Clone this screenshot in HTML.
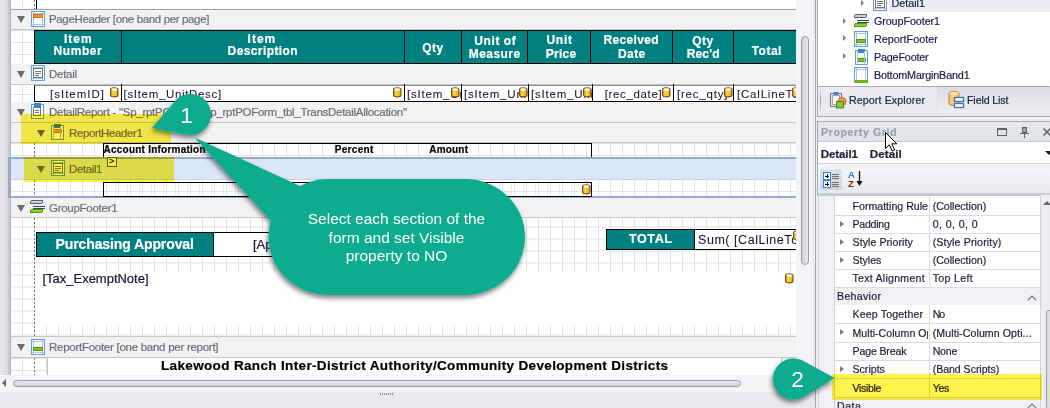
<!DOCTYPE html>
<html><head><meta charset="utf-8">
<style>
*{box-sizing:border-box;margin:0;padding:0}
html,body{width:1050px;height:408px;overflow:hidden;background:#f0f0f0;font-family:"Liberation Sans",sans-serif;position:relative}
.a{position:absolute}
#w1604_1{letter-spacing:-0.356px}
#w283_2{letter-spacing:1.000px}
#w483_3{letter-spacing:0.591px}
#w288_4{letter-spacing:1.000px}
#w700_5{letter-spacing:0.398px}
#w208_6{letter-spacing:0.392px}
#w415_7{letter-spacing:0.583px}
#w514_8{letter-spacing:0.449px}
#w257_9{letter-spacing:0.791px}
#w304_10{letter-spacing:0.260px}
#w550_11{letter-spacing:0.328px}
#w274_12{letter-spacing:0.461px}
#w208_13{letter-spacing:0.392px}
#w328_14{letter-spacing:0.149px}
#w297_15{letter-spacing:0.480px}
#w280_16{letter-spacing:-0.281px}
#w550_17{letter-spacing:1.000px}
#w975_18{letter-spacing:0.662px}
#w570_22{letter-spacing:0.649px}
#w3580_25{letter-spacing:-0.277px}
#w738_26{letter-spacing:-0.403px}
#w1020_27{letter-spacing:0.234px}
#w386_28{letter-spacing:0.319px}
#w387_29{letter-spacing:0.184px}
#w335_30{letter-spacing:-0.385px}
#w686_31{letter-spacing:-0.274px}
#w1384_32{letter-spacing:-0.105px}
#w430_34{letter-spacing:0.621px}
#w1060_36{letter-spacing:-0.015px}
#w1695_37{letter-spacing:-0.268px}
#w5070_38{letter-spacing:0.349px}
#w334_40{letter-spacing:-0.035px}
#w662_41{letter-spacing:-0.093px}
#w640_42{letter-spacing:0.034px}
#w548_43{letter-spacing:-0.180px}
#w958_44{letter-spacing:-0.165px}
#w760_45{letter-spacing:0.129px}
#w415_46{letter-spacing:-0.099px}
#w756_47{letter-spacing:0.609px}
#w372_48{letter-spacing:-0.139px}
#w320_49{letter-spacing:0.084px}
#w755_50{letter-spacing:0.009px}
#w535_51{letter-spacing:-0.007px}
#w374_52{letter-spacing:-0.248px}
#w450_53{letter-spacing:0.418px}
#w603_54{letter-spacing:0.064px}
#w687_55{letter-spacing:0.146px}
#w289_56{letter-spacing:0.008px}
#w535_57{letter-spacing:-0.007px}
#w722_58{letter-spacing:0.253px}
#w399_59{letter-spacing:0.314px}
#w706_60{letter-spacing:0.155px}
#w122_61{letter-spacing:-1.000px}
#w800_62{letter-spacing:0.037px}
#w989_63{letter-spacing:0.088px}
#w540_64{letter-spacing:-0.151px}
#w246_65{letter-spacing:-0.243px}
#w324_66{letter-spacing:0.002px}
#w665_67{letter-spacing:-0.048px}
#w290_68{letter-spacing:-0.336px}
#w166_69{letter-spacing:-0.348px}
#w440_70{letter-spacing:0.312px}
#w240_71{letter-spacing:0.536px}
</style></head><body>
<div class="a" style="left:0;top:0;width:796px;height:375px;overflow:hidden;background:#f0f0f0">
<div class="a" style="left:0px;top:0px;width:11px;height:375px;background:linear-gradient(to right,#e8e8ec,#dcdce0 60%,#c4c4c8 90%,#a8a8ac)"></div>
<div class="a" style="left:11px;top:0px;width:785px;height:10px;background-color:#fff;background-image:linear-gradient(to right,#e3e3e3 1px,transparent 1px),linear-gradient(to bottom,#e3e3e3 1px,transparent 1px);background-size:12px 12px;background-position:11px 10px;border-bottom:1px solid #a0a0a0"></div>
<div class="a" style="left:34px;top:0px;width:1px;height:9px;background:repeating-linear-gradient(to bottom,#7a7a7a 0 2px,transparent 2px 4px)"></div>
<div class="a" style="left:36px;top:0px;width:760px;height:9px;background:#fff;border-left:1px solid #000"></div>
<div class="a" style="left:11px;top:10px;width:785px;height:20px;background:#f2f2f2;border-bottom:1px solid #c6c6c6"></div>
<div class="a" style="left:17px;top:16px;width:0;height:0;border-left:4px solid transparent;border-right:4px solid transparent;border-top:7px solid #6a6a6a"></div>
<span class="a" id="w1604_1" style="left:49px;top:13.77px;font-size:11.5px;line-height:11.5px;font-weight:normal;color:#6c6c76;white-space:pre;-webkit-text-stroke:0.2px #6c6c76;">PageHeader [one band per page]</span>
<div class="a" style="left:11px;top:30px;width:785px;height:34px;background-color:#fff;background-image:linear-gradient(to right,#e3e3e3 1px,transparent 1px),linear-gradient(to bottom,#e3e3e3 1px,transparent 1px);background-size:12px 12px;background-position:11px 0px;"></div>
<div class="a" style="left:34px;top:30px;width:1px;height:34px;background:repeating-linear-gradient(to bottom,#7a7a7a 0 2px,transparent 2px 4px)"></div>
<div class="a" style="left:34px;top:30px;width:770px;height:34px;background:#008080;border:1px solid #000"></div>
<div class="a" style="left:121px;top:30px;width:1px;height:34px;background:#000"></div>
<div class="a" style="left:404px;top:30px;width:1px;height:34px;background:#000"></div>
<div class="a" style="left:461px;top:30px;width:1px;height:34px;background:#000"></div>
<div class="a" style="left:527px;top:30px;width:1px;height:34px;background:#000"></div>
<div class="a" style="left:590px;top:30px;width:1px;height:34px;background:#000"></div>
<div class="a" style="left:672px;top:30px;width:1px;height:34px;background:#000"></div>
<div class="a" style="left:733px;top:30px;width:1px;height:34px;background:#000"></div>
<span class="a" id="w283_2" style="left:64px;top:32.84px;font-size:12px;line-height:12px;font-weight:bold;color:#fff;white-space:pre;-webkit-text-stroke:0.2px #fff;">Item</span>
<span class="a" id="w483_3" style="left:53.5px;top:45.44px;font-size:12px;line-height:12px;font-weight:bold;color:#fff;white-space:pre;-webkit-text-stroke:0.2px #fff;">Number</span>
<span class="a" id="w288_4" style="left:247.6px;top:32.74px;font-size:12px;line-height:12px;font-weight:bold;color:#fff;white-space:pre;-webkit-text-stroke:0.2px #fff;">Item</span>
<span class="a" id="w700_5" style="left:227.6px;top:45.44px;font-size:12px;line-height:12px;font-weight:bold;color:#fff;white-space:pre;-webkit-text-stroke:0.2px #fff;">Description</span>
<span class="a" id="w208_6" style="left:422.3px;top:41.64px;font-size:12px;line-height:12px;font-weight:bold;color:#fff;white-space:pre;-webkit-text-stroke:0.2px #fff;">Qty</span>
<span class="a" id="w415_7" style="left:474.3px;top:34.54px;font-size:12px;line-height:12px;font-weight:bold;color:#fff;white-space:pre;-webkit-text-stroke:0.2px #fff;">Unit of</span>
<span class="a" id="w514_8" style="left:468.7px;top:48.44px;font-size:12px;line-height:12px;font-weight:bold;color:#fff;white-space:pre;-webkit-text-stroke:0.2px #fff;">Measure</span>
<span class="a" id="w257_9" style="left:546.4px;top:34.14px;font-size:12px;line-height:12px;font-weight:bold;color:#fff;white-space:pre;-webkit-text-stroke:0.2px #fff;">Unit</span>
<span class="a" id="w304_10" style="left:545.7px;top:48.44px;font-size:12px;line-height:12px;font-weight:bold;color:#fff;white-space:pre;-webkit-text-stroke:0.2px #fff;">Price</span>
<span class="a" id="w550_11" style="left:603.6px;top:34.14px;font-size:12px;line-height:12px;font-weight:bold;color:#fff;white-space:pre;-webkit-text-stroke:0.2px #fff;">Received</span>
<span class="a" id="w274_12" style="left:617.9px;top:48.44px;font-size:12px;line-height:12px;font-weight:bold;color:#fff;white-space:pre;-webkit-text-stroke:0.2px #fff;">Date</span>
<span class="a" id="w208_13" style="left:692.3px;top:34.54px;font-size:12px;line-height:12px;font-weight:bold;color:#fff;white-space:pre;-webkit-text-stroke:0.2px #fff;">Qty</span>
<span class="a" id="w328_14" style="left:686.7px;top:48.44px;font-size:12px;line-height:12px;font-weight:bold;color:#fff;white-space:pre;-webkit-text-stroke:0.2px #fff;">Rec'd</span>
<span class="a" id="w297_15" style="left:751.7px;top:45.34px;font-size:12px;line-height:12px;font-weight:bold;color:#fff;white-space:pre;-webkit-text-stroke:0.2px #fff;">Total</span>
<div class="a" style="left:11px;top:64px;width:785px;height:21px;background:#f2f2f2;border-bottom:1px solid #c6c6c6"></div>
<div class="a" style="left:17px;top:71px;width:0;height:0;border-left:4px solid transparent;border-right:4px solid transparent;border-top:7px solid #6a6a6a"></div>
<span class="a" id="w280_16" style="left:49px;top:68.77px;font-size:11.5px;line-height:11.5px;font-weight:normal;color:#6c6c76;white-space:pre;-webkit-text-stroke:0.2px #6c6c76;">Detail</span>
<div class="a" style="left:11px;top:85px;width:785px;height:17px;background-color:#fff;background-image:linear-gradient(to right,#e3e3e3 1px,transparent 1px),linear-gradient(to bottom,#e3e3e3 1px,transparent 1px);background-size:12px 12px;background-position:11px 9px;"></div>
<div class="a" style="left:34px;top:85px;width:1px;height:17px;background:repeating-linear-gradient(to bottom,#7a7a7a 0 2px,transparent 2px 4px)"></div>
<div class="a" style="left:34px;top:85px;width:770px;height:17px;background:#fff;border:1px solid #000;border-top-color:#8a8a8a"></div>
<div class="a" style="left:35px;top:85px;width:86px;height:16px;overflow:hidden">
<span class="a" id="w550_17" style="left:15px;top:3.57px;font-size:11.5px;line-height:11.5px;font-weight:normal;color:#1e0f3a;white-space:pre;-webkit-text-stroke:0.2px #1e0f3a;-webkit-text-stroke:0.05px #1e0f3a">[sItemID]</span>
<svg class="a" style="left:75px;top:2px" width="9" height="11" viewBox="0 0 9 11"><defs><linearGradient id="cg75_2" x1="0" x2="1"><stop offset="0" stop-color="#e0a818"/><stop offset="0.4" stop-color="#fcd650"/><stop offset="1" stop-color="#e0a010"/></linearGradient></defs><path d="M0.6,2.3 C0.6,0.3 8.0,0.3 8.0,2.3 L8.0,8.3 C8.0,10.4 0.6,10.4 0.6,8.3 Z" fill="url(#cg75_2)" stroke="#7a4a10" stroke-width="1.1"/><ellipse cx="4.3" cy="2.6" rx="3" ry="1.3" fill="#fff8e0"/></svg>
</div>
<div class="a" style="left:121px;top:84px;width:1px;height:18px;background:#000"></div>
<div class="a" style="left:122px;top:85px;width:282px;height:16px;overflow:hidden">
<span class="a" id="w975_18" style="left:1.5999999999999943px;top:3.57px;font-size:11.5px;line-height:11.5px;font-weight:normal;color:#1e0f3a;white-space:pre;-webkit-text-stroke:0.2px #1e0f3a;-webkit-text-stroke:0.05px #1e0f3a">[sItem_UnitDesc]</span>
<svg class="a" style="left:271px;top:2px" width="9" height="11" viewBox="0 0 9 11"><defs><linearGradient id="cg271_2" x1="0" x2="1"><stop offset="0" stop-color="#e0a818"/><stop offset="0.4" stop-color="#fcd650"/><stop offset="1" stop-color="#e0a010"/></linearGradient></defs><path d="M0.6,2.3 C0.6,0.3 8.0,0.3 8.0,2.3 L8.0,8.3 C8.0,10.4 0.6,10.4 0.6,8.3 Z" fill="url(#cg271_2)" stroke="#7a4a10" stroke-width="1.1"/><ellipse cx="4.3" cy="2.6" rx="3" ry="1.3" fill="#fff8e0"/></svg>
</div>
<div class="a" style="left:404px;top:84px;width:1px;height:18px;background:#000"></div>
<div class="a" style="left:405px;top:85px;width:56px;height:16px;overflow:hidden">
<span class="a" style="left:2px;top:3.57px;font-size:11.5px;line-height:11.5px;font-weight:normal;color:#1e0f3a;white-space:pre;-webkit-text-stroke:0.2px #1e0f3a;letter-spacing:0.8px;-webkit-text-stroke:0.05px #1e0f3a">[sItem_UnitQty]</span>
<svg class="a" style="left:46px;top:2px" width="9" height="11" viewBox="0 0 9 11"><defs><linearGradient id="cg46_2" x1="0" x2="1"><stop offset="0" stop-color="#e0a818"/><stop offset="0.4" stop-color="#fcd650"/><stop offset="1" stop-color="#e0a010"/></linearGradient></defs><path d="M0.6,2.3 C0.6,0.3 8.0,0.3 8.0,2.3 L8.0,8.3 C8.0,10.4 0.6,10.4 0.6,8.3 Z" fill="url(#cg46_2)" stroke="#7a4a10" stroke-width="1.1"/><ellipse cx="4.3" cy="2.6" rx="3" ry="1.3" fill="#fff8e0"/></svg>
</div>
<div class="a" style="left:461px;top:84px;width:1px;height:18px;background:#000"></div>
<div class="a" style="left:462px;top:85px;width:66px;height:16px;overflow:hidden">
<span class="a" style="left:2px;top:3.57px;font-size:11.5px;line-height:11.5px;font-weight:normal;color:#1e0f3a;white-space:pre;-webkit-text-stroke:0.2px #1e0f3a;letter-spacing:0.8px;-webkit-text-stroke:0.05px #1e0f3a">[sItem_UnitMeas]</span>
<svg class="a" style="left:57px;top:2px" width="9" height="11" viewBox="0 0 9 11"><defs><linearGradient id="cg57_2" x1="0" x2="1"><stop offset="0" stop-color="#e0a818"/><stop offset="0.4" stop-color="#fcd650"/><stop offset="1" stop-color="#e0a010"/></linearGradient></defs><path d="M0.6,2.3 C0.6,0.3 8.0,0.3 8.0,2.3 L8.0,8.3 C8.0,10.4 0.6,10.4 0.6,8.3 Z" fill="url(#cg57_2)" stroke="#7a4a10" stroke-width="1.1"/><ellipse cx="4.3" cy="2.6" rx="3" ry="1.3" fill="#fff8e0"/></svg>
</div>
<div class="a" style="left:528px;top:84px;width:1px;height:18px;background:#000"></div>
<div class="a" style="left:529px;top:85px;width:63px;height:16px;overflow:hidden">
<span class="a" style="left:2px;top:3.57px;font-size:11.5px;line-height:11.5px;font-weight:normal;color:#1e0f3a;white-space:pre;-webkit-text-stroke:0.2px #1e0f3a;letter-spacing:0.8px;-webkit-text-stroke:0.05px #1e0f3a">[sItem_UnitPrice]</span>
<svg class="a" style="left:54px;top:2px" width="9" height="11" viewBox="0 0 9 11"><defs><linearGradient id="cg54_2" x1="0" x2="1"><stop offset="0" stop-color="#e0a818"/><stop offset="0.4" stop-color="#fcd650"/><stop offset="1" stop-color="#e0a010"/></linearGradient></defs><path d="M0.6,2.3 C0.6,0.3 8.0,0.3 8.0,2.3 L8.0,8.3 C8.0,10.4 0.6,10.4 0.6,8.3 Z" fill="url(#cg54_2)" stroke="#7a4a10" stroke-width="1.1"/><ellipse cx="4.3" cy="2.6" rx="3" ry="1.3" fill="#fff8e0"/></svg>
</div>
<div class="a" style="left:592px;top:84px;width:1px;height:18px;background:#000"></div>
<div class="a" style="left:593px;top:85px;width:80px;height:16px;overflow:hidden">
<span class="a" id="w570_22" style="left:11.700000000000045px;top:3.57px;font-size:11.5px;line-height:11.5px;font-weight:normal;color:#1e0f3a;white-space:pre;-webkit-text-stroke:0.2px #1e0f3a;-webkit-text-stroke:0.05px #1e0f3a">[rec_date]</span>
<svg class="a" style="left:69px;top:2px" width="9" height="11" viewBox="0 0 9 11"><defs><linearGradient id="cg69_2" x1="0" x2="1"><stop offset="0" stop-color="#e0a818"/><stop offset="0.4" stop-color="#fcd650"/><stop offset="1" stop-color="#e0a010"/></linearGradient></defs><path d="M0.6,2.3 C0.6,0.3 8.0,0.3 8.0,2.3 L8.0,8.3 C8.0,10.4 0.6,10.4 0.6,8.3 Z" fill="url(#cg69_2)" stroke="#7a4a10" stroke-width="1.1"/><ellipse cx="4.3" cy="2.6" rx="3" ry="1.3" fill="#fff8e0"/></svg>
</div>
<div class="a" style="left:673px;top:84px;width:1px;height:18px;background:#000"></div>
<div class="a" style="left:674px;top:85px;width:59px;height:16px;overflow:hidden">
<span class="a" style="left:3px;top:3.57px;font-size:11.5px;line-height:11.5px;font-weight:normal;color:#1e0f3a;white-space:pre;-webkit-text-stroke:0.2px #1e0f3a;letter-spacing:0.8px;-webkit-text-stroke:0.05px #1e0f3a">[rec_qty]</span>
<svg class="a" style="left:50px;top:2px" width="9" height="11" viewBox="0 0 9 11"><defs><linearGradient id="cg50_2" x1="0" x2="1"><stop offset="0" stop-color="#e0a818"/><stop offset="0.4" stop-color="#fcd650"/><stop offset="1" stop-color="#e0a010"/></linearGradient></defs><path d="M0.6,2.3 C0.6,0.3 8.0,0.3 8.0,2.3 L8.0,8.3 C8.0,10.4 0.6,10.4 0.6,8.3 Z" fill="url(#cg50_2)" stroke="#7a4a10" stroke-width="1.1"/><ellipse cx="4.3" cy="2.6" rx="3" ry="1.3" fill="#fff8e0"/></svg>
</div>
<div class="a" style="left:733px;top:84px;width:1px;height:18px;background:#000"></div>
<div class="a" style="left:734px;top:85px;width:70px;height:16px;overflow:hidden">
<span class="a" style="left:3px;top:3.57px;font-size:11.5px;line-height:11.5px;font-weight:normal;color:#1e0f3a;white-space:pre;-webkit-text-stroke:0.2px #1e0f3a;letter-spacing:0.8px;-webkit-text-stroke:0.05px #1e0f3a">[CalLineTotal]</span>
<svg class="a" style="left:58px;top:2px" width="9" height="11" viewBox="0 0 9 11"><defs><linearGradient id="cg58_2" x1="0" x2="1"><stop offset="0" stop-color="#e0a818"/><stop offset="0.4" stop-color="#fcd650"/><stop offset="1" stop-color="#e0a010"/></linearGradient></defs><path d="M0.6,2.3 C0.6,0.3 8.0,0.3 8.0,2.3 L8.0,8.3 C8.0,10.4 0.6,10.4 0.6,8.3 Z" fill="url(#cg58_2)" stroke="#7a4a10" stroke-width="1.1"/><ellipse cx="4.3" cy="2.6" rx="3" ry="1.3" fill="#fff8e0"/></svg>
</div>
<div class="a" style="left:11px;top:102px;width:785px;height:21px;background:#f2f2f2;border-bottom:1px solid #c6c6c6"></div>
<div class="a" style="left:17px;top:109px;width:0;height:0;border-left:4px solid transparent;border-right:4px solid transparent;border-top:7px solid #6a6a6a"></div>
<span class="a" id="w3580_25" style="left:49px;top:106.77px;font-size:11.5px;line-height:11.5px;font-weight:normal;color:#6c6c76;white-space:pre;-webkit-text-stroke:0.2px #6c6c76;">DetailReport - "Sp_rptPOForm_Sp_rptPOForm_tbl_TransDetailAllocation"</span>
<div class="a" style="left:11px;top:123px;width:785px;height:20px;background:#f2f2f2;border-bottom:1px solid #c6c6c6"></div>
<div class="a" style="left:37px;top:130px;width:0;height:0;border-left:4px solid transparent;border-right:4px solid transparent;border-top:7px solid #6a6a6a"></div>
<span class="a" id="w738_26" style="left:69px;top:127.77px;font-size:11.5px;line-height:11.5px;font-weight:normal;color:#6c6c76;white-space:pre;-webkit-text-stroke:0.2px #6c6c76;">ReportHeader1</span>
<div class="a" style="left:11px;top:143px;width:785px;height:15px;background-color:#fff;background-image:linear-gradient(to right,#e3e3e3 1px,transparent 1px),linear-gradient(to bottom,#e3e3e3 1px,transparent 1px);background-size:12px 12px;background-position:11px 0px;"></div>
<div class="a" style="left:34px;top:143px;width:1px;height:15px;background:repeating-linear-gradient(to bottom,#7a7a7a 0 2px,transparent 2px 4px)"></div>
<div class="a" style="left:103px;top:143px;width:489px;height:15px;border:1px solid #000"></div>
<span class="a" id="w1020_27" style="left:103.5px;top:145.34px;font-size:10px;line-height:10px;font-weight:bold;color:#000;white-space:pre;-webkit-text-stroke:0.2px #000;">Account Information</span>
<span class="a" id="w386_28" style="left:334.7px;top:145.34px;font-size:10px;line-height:10px;font-weight:bold;color:#000;white-space:pre;-webkit-text-stroke:0.2px #000;">Percent</span>
<span class="a" id="w387_29" style="left:429.3px;top:145.34px;font-size:10px;line-height:10px;font-weight:bold;color:#000;white-space:pre;-webkit-text-stroke:0.2px #000;">Amount</span>
<div class="a" style="left:8px;top:157px;width:788px;height:41px;background:#dbe6f6;border-top:2px solid #97aac6;border-bottom:2px solid #97aac6;border-left:3px solid #97aac6"></div>
<div class="a" style="left:11px;top:159px;width:785px;height:21px;background:#dbe6f6;border-bottom:1px solid #c9d3e2"></div>
<div class="a" style="left:37px;top:166px;width:0;height:0;border-left:4px solid transparent;border-right:4px solid transparent;border-top:7px solid #6a6a6a"></div>
<span class="a" id="w335_30" style="left:69px;top:163.77px;font-size:11.5px;line-height:11.5px;font-weight:normal;color:#6c6c76;white-space:pre;-webkit-text-stroke:0.2px #6c6c76;">Detail1</span>
<div class="a" style="left:11px;top:180px;width:785px;height:16px;background-color:#fff;background-image:linear-gradient(to right,#e3e3e3 1px,transparent 1px),linear-gradient(to bottom,#e3e3e3 1px,transparent 1px);background-size:12px 12px;background-position:11px 11px;"></div>
<div class="a" style="left:34px;top:180px;width:1px;height:16px;background:repeating-linear-gradient(to bottom,#7a7a7a 0 2px,transparent 2px 4px)"></div>
<div class="a" style="left:103px;top:182px;width:489px;height:15px;border:1px solid #000;background:repeating-linear-gradient(to right,transparent 0 11px,#e8e8e8 11px 12px)"></div>
<svg class="a" style="left:582px;top:184px" width="9" height="11" viewBox="0 0 9 11"><defs><linearGradient id="cg582_184" x1="0" x2="1"><stop offset="0" stop-color="#e0a818"/><stop offset="0.4" stop-color="#fcd650"/><stop offset="1" stop-color="#e0a010"/></linearGradient></defs><path d="M0.6,2.3 C0.6,0.3 8.0,0.3 8.0,2.3 L8.0,8.3 C8.0,10.4 0.6,10.4 0.6,8.3 Z" fill="url(#cg582_184)" stroke="#7a4a10" stroke-width="1.1"/><ellipse cx="4.3" cy="2.6" rx="3" ry="1.3" fill="#fff8e0"/></svg>
<div class="a" style="left:107px;top:157px;width:10px;height:10px;background:#fbf6c8;border:1px solid #5a5a40"></div>
<span class="a" style="left:109px;top:156px;font-size:9px;line-height:10px;color:#222;font-weight:bold">&gt;</span>
<div class="a" style="left:11px;top:198px;width:785px;height:20px;background:#f2f2f2;border-bottom:1px solid #c6c6c6"></div>
<div class="a" style="left:17px;top:205px;width:0;height:0;border-left:4px solid transparent;border-right:4px solid transparent;border-top:7px solid #6a6a6a"></div>
<span class="a" id="w686_31" style="left:49px;top:202.77px;font-size:11.5px;line-height:11.5px;font-weight:normal;color:#6c6c76;white-space:pre;-webkit-text-stroke:0.2px #6c6c76;">GroupFooter1</span>
<div class="a" style="left:11px;top:218px;width:785px;height:119px;background-color:#fff;background-image:linear-gradient(to right,#e3e3e3 1px,transparent 1px),linear-gradient(to bottom,#e3e3e3 1px,transparent 1px);background-size:12px 12px;background-position:11px 8.5px;border-bottom:1px solid #c6c6c6"></div>
<div class="a" style="left:34px;top:218px;width:1px;height:119px;background:repeating-linear-gradient(to bottom,#7a7a7a 0 2px,transparent 2px 4px)"></div>
<div class="a" style="left:36px;top:232px;width:178px;height:25px;background:#008080;border:1px solid #000"></div>
<span class="a" id="w1384_32" style="left:55.5px;top:236.55px;font-size:14px;line-height:14px;font-weight:bold;color:#fff;white-space:pre;-webkit-text-stroke:0.2px #fff;">Purchasing Approval</span>
<div class="a" style="left:214px;top:232px;width:259px;height:25px;background:#fff;border:1px solid #000;border-left:none"></div>
<span class="a" style="left:253px;top:237.50px;font-size:13px;line-height:13px;font-weight:normal;color:#1e0f3a;white-space:pre;-webkit-text-stroke:0.2px #1e0f3a;">[ApprovedBy]</span>
<div class="a" style="left:606px;top:229px;width:89px;height:21px;background:#008080;border:1px solid #000"></div>
<span class="a" id="w430_34" style="left:629px;top:233.42px;font-size:12.5px;line-height:12.5px;font-weight:bold;color:#fff;white-space:pre;-webkit-text-stroke:0.2px #fff;">TOTAL</span>
<div class="a" style="left:695px;top:229px;width:109px;height:21px;background:#fff;border:1px solid #000;border-left:none"></div>
<span class="a" style="left:698px;top:234.22px;font-size:12.5px;line-height:12.5px;font-weight:normal;color:#1c1030;white-space:pre;-webkit-text-stroke:0.2px #1c1030;letter-spacing:0.55px;-webkit-text-stroke:0.05px #1c1030">Sum( [CalLineTotal])</span>
<svg class="a" style="left:793px;top:230px" width="9" height="11" viewBox="0 0 9 11"><defs><linearGradient id="cg793_230" x1="0" x2="1"><stop offset="0" stop-color="#e0a818"/><stop offset="0.4" stop-color="#fcd650"/><stop offset="1" stop-color="#e0a010"/></linearGradient></defs><path d="M0.6,2.3 C0.6,0.3 8.0,0.3 8.0,2.3 L8.0,8.3 C8.0,10.4 0.6,10.4 0.6,8.3 Z" fill="url(#cg793_230)" stroke="#7a4a10" stroke-width="1.1"/><ellipse cx="4.3" cy="2.6" rx="3" ry="1.3" fill="#fff8e0"/></svg>
<div class="a" style="left:36px;top:272px;width:760px;height:54px;background:#fff"></div>
<span class="a" id="w1060_36" style="left:42.5px;top:271.50px;font-size:13px;line-height:13px;font-weight:normal;color:#1e0f3a;white-space:pre;-webkit-text-stroke:0.2px #1e0f3a;">[Tax_ExemptNote]</span>
<svg class="a" style="left:785px;top:273px" width="9" height="11" viewBox="0 0 9 11"><defs><linearGradient id="cg785_273" x1="0" x2="1"><stop offset="0" stop-color="#e0a818"/><stop offset="0.4" stop-color="#fcd650"/><stop offset="1" stop-color="#e0a010"/></linearGradient></defs><path d="M0.6,2.3 C0.6,0.3 8.0,0.3 8.0,2.3 L8.0,8.3 C8.0,10.4 0.6,10.4 0.6,8.3 Z" fill="url(#cg785_273)" stroke="#7a4a10" stroke-width="1.1"/><ellipse cx="4.3" cy="2.6" rx="3" ry="1.3" fill="#fff8e0"/></svg>
<div class="a" style="left:11px;top:337px;width:785px;height:21px;background:#f2f2f2;border-bottom:1px solid #c6c6c6"></div>
<div class="a" style="left:17px;top:344px;width:0;height:0;border-left:4px solid transparent;border-right:4px solid transparent;border-top:7px solid #6a6a6a"></div>
<span class="a" id="w1695_37" style="left:49px;top:341.77px;font-size:11.5px;line-height:11.5px;font-weight:normal;color:#6c6c76;white-space:pre;-webkit-text-stroke:0.2px #6c6c76;">ReportFooter [one band per report]</span>
<div class="a" style="left:11px;top:358px;width:785px;height:20px;background-color:#fff;background-image:linear-gradient(to right,#e3e3e3 1px,transparent 1px),linear-gradient(to bottom,#e3e3e3 1px,transparent 1px);background-size:12px 12px;background-position:11px 0px;"></div>
<div class="a" style="left:34px;top:358px;width:1px;height:20px;background:repeating-linear-gradient(to bottom,#7a7a7a 0 2px,transparent 2px 4px)"></div>
<div class="a" style="left:47px;top:358px;width:735px;height:20px;background:#fff;border-left:1px solid #c0c0c0;border-right:1px solid #c0c0c0"></div>
<span class="a" id="w5070_38" style="left:161px;top:358.57px;font-size:13.5px;line-height:13.5px;font-weight:bold;color:#000;white-space:pre;-webkit-text-stroke:0.2px #000;">Lakewood Ranch Inter-District Authority/Community Development Districts</span>
<span class="a" style="left:320px;top:373.57px;font-size:13.5px;line-height:13.5px;font-weight:bold;color:#000;white-space:pre;-webkit-text-stroke:0.2px #000;">Lakewood Ranch, Florida</span>
</div>
<div class="a" style="left:796px;top:0px;width:19px;height:392px;background:#f3f4f6"></div>
<div class="a" style="left:801px;top:36px;width:8px;height:229px;border:1px solid #9c9ca8;border-radius:4px;background:linear-gradient(to right,#d2d3da,#e8e8ee)"></div>
<div class="a" style="left:0px;top:375px;width:796px;height:17px;background:#f3f4f6"></div>
<div class="a" style="left:13px;top:380px;width:728px;height:7px;border:1px solid #9c9ca8;border-radius:3.5px;background:linear-gradient(to bottom,#e8e8ee,#d2d3da)"></div>
<div class="a" style="left:2px;top:379px;width:0;height:0;border-top:4px solid transparent;border-bottom:4px solid transparent;border-right:4px solid #6a6a6a"></div>
<div class="a" style="left:0px;top:392px;width:815px;height:16px;background:#e9eaee"></div>
<div class="a" style="left:380px;top:393px;width:13px;height:2px;background:repeating-linear-gradient(to right,#8a8a8a 0 1px,transparent 1px 2px)"></div>
<div class="a" style="left:813px;top:0px;width:1px;height:408px;background:#e2e2e6"></div>
<div class="a" style="left:815px;top:0px;width:1px;height:408px;background:#a2a4b0"></div>
<div class="a" style="left:816px;top:0px;width:1px;height:408px;background:#f0f0f2"></div>
<div class="a" style="left:817px;top:0px;width:1px;height:408px;background:#a2a4b0"></div>
<div class="a" style="left:818px;top:0px;width:232px;height:86px;background:#fff"></div>
<div class="a" style="left:818px;top:86px;width:232px;height:1px;background:#a9acb6"></div>
<div class="a" style="left:889px;top:0px;width:161px;height:12px;background:#eceef2"></div>
<div class="a" style="left:861px;top:0px;width:0;height:0;border-top:3.5px solid transparent;border-bottom:3.5px solid transparent;border-left:3.5px solid #7c7c84"></div>
<span class="a" id="w334_40" style="left:891.6px;top:-1.84px;font-size:10.8px;line-height:10.8px;font-weight:normal;color:#1e1e46;white-space:pre;-webkit-text-stroke:0.2px #1e1e46;">Detail1</span>
<div class="a" style="left:843px;top:17.5px;width:0;height:0;border-top:3.5px solid transparent;border-bottom:3.5px solid transparent;border-left:3.5px solid #7c7c84"></div>
<span class="a" id="w662_41" style="left:873.9px;top:16.46px;font-size:10.8px;line-height:10.8px;font-weight:normal;color:#1e1e46;white-space:pre;-webkit-text-stroke:0.2px #1e1e46;">GroupFooter1</span>
<div class="a" style="left:843px;top:35.4px;width:0;height:0;border-top:3.5px solid transparent;border-bottom:3.5px solid transparent;border-left:3.5px solid #7c7c84"></div>
<span class="a" id="w640_42" style="left:873.9px;top:34.36px;font-size:10.8px;line-height:10.8px;font-weight:normal;color:#1e1e46;white-space:pre;-webkit-text-stroke:0.2px #1e1e46;">ReportFooter</span>
<div class="a" style="left:843px;top:53.1px;width:0;height:0;border-top:3.5px solid transparent;border-bottom:3.5px solid transparent;border-left:3.5px solid #7c7c84"></div>
<span class="a" id="w548_43" style="left:873.9px;top:52.06px;font-size:10.8px;line-height:10.8px;font-weight:normal;color:#1e1e46;white-space:pre;-webkit-text-stroke:0.2px #1e1e46;">PageFooter</span>
<span class="a" id="w958_44" style="left:873.9px;top:69.96px;font-size:10.8px;line-height:10.8px;font-weight:normal;color:#1e1e46;white-space:pre;-webkit-text-stroke:0.2px #1e1e46;">BottomMarginBand1</span>
<div class="a" style="left:818px;top:87px;width:232px;height:30px;background:#e9eaee"></div>
<div class="a" style="left:818px;top:116px;width:232px;height:1px;background:#a9acb6"></div>
<div class="a" style="left:820px;top:89px;width:1px;height:24px;background:linear-gradient(to bottom,rgba(169,172,182,0),#a9acb6 40%,#a9acb6 60%,rgba(169,172,182,0))"></div>
<div class="a" style="left:937px;top:87px;width:113px;height:26px;background:linear-gradient(to bottom,#d9dbe1,#e6e8ec 60%,#eceef1);border-left:1px solid #e0e2e6"></div>
<svg class="a" style="left:829px;top:91px" width="18" height="18"><rect x="1.5" y="2.5" width="11" height="13" fill="#e8eaee" stroke="#6e737c"/><rect x="3.5" y="4.5" width="7" height="9" fill="#fff" stroke="#a0a4ac"/><rect x="4.5" y="1" width="5" height="3" rx="1" fill="#3a7bd5"/><circle cx="13" cy="10.5" r="4" fill="#f0a050" stroke="#c86818"/><rect x="7.5" y="10.5" width="7" height="6.5" fill="#8cc63e" stroke="#4a8a10"/></svg>
<svg class="a" style="left:948px;top:91px" width="17" height="18"><path d="M1,2.5 C1,0 11,0 11,2.5 L11,12.5 C11,15 1,15 1,12.5 Z" fill="#f7c77a" stroke="#d07818"/><ellipse cx="6" cy="2.5" rx="4.5" ry="1.6" fill="#fde6b8"/><rect x="6.5" y="6.5" width="9" height="4" fill="#fff" stroke="#3e70b8" stroke-width="1.3"/><rect x="6.5" y="12.5" width="9" height="4" fill="#fff" stroke="#3e70b8" stroke-width="1.3"/></svg>
<span class="a" id="w760_45" style="left:849px;top:95.23px;font-size:10.6px;line-height:10.6px;font-weight:normal;color:#1e1e46;white-space:pre;-webkit-text-stroke:0.2px #1e1e46;">Report Explorer</span>
<span class="a" id="w415_46" style="left:967px;top:95.23px;font-size:10.6px;line-height:10.6px;font-weight:normal;color:#1e1e46;white-space:pre;-webkit-text-stroke:0.2px #1e1e46;">Field List</span>
<div class="a" style="left:816px;top:117px;width:234px;height:4px;background:#eeeff2"></div>
<div class="a" style="left:818px;top:121px;width:232px;height:287px;background:#eceef2"></div>
<div class="a" style="left:818px;top:121px;width:232px;height:1px;background:#a9acb6"></div>
<div class="a" style="left:818px;top:122px;width:232px;height:20px;background:linear-gradient(to bottom,#e7e9ed,#dfe2e7)"></div>
<div class="a" style="left:818px;top:141px;width:232px;height:1px;background:#c8cad2"></div>
<span class="a" id="w756_47" style="left:821px;top:126.93px;font-size:10.6px;line-height:10.6px;font-weight:bold;color:#96a0ae;white-space:pre;-webkit-text-stroke:0.2px #96a0ae;">Property Grid</span>
<div class="a" style="left:997px;top:128px;width:10px;height:8px;border:1px solid #5f636c;border-top-width:2px"></div>
<div class="a" style="left:1022px;top:127px;width:5px;height:6px;border:1px solid #5f636c;background:#a0a4ac"></div>
<div class="a" style="left:1020px;top:133px;width:9px;height:1px;background:#5f636c"></div>
<div class="a" style="left:1024px;top:134px;width:1px;height:4px;background:#5f636c"></div>
<svg class="a" style="left:1043px;top:128px" width="8" height="8"><path d="M0.5,0.5 L7.5,7.5 M7.5,0.5 L0.5,7.5" stroke="#5f636c" stroke-width="1.5"/></svg>
<div class="a" style="left:818px;top:142px;width:232px;height:21px;background:#fff"></div>
<div class="a" style="left:818px;top:163px;width:232px;height:1px;background:#cfd1d8"></div>
<span class="a" id="w372_48" style="left:820.8px;top:147.68px;font-size:11.6px;line-height:11.6px;font-weight:bold;color:#1e1e3c;white-space:pre;-webkit-text-stroke:0.2px #1e1e3c;">Detail1</span>
<span class="a" id="w320_49" style="left:869.8px;top:147.68px;font-size:11.6px;line-height:11.6px;font-weight:bold;color:#1e1e3c;white-space:pre;-webkit-text-stroke:0.2px #1e1e3c;">Detail</span>
<div class="a" style="left:1045px;top:151px;width:0;height:0;border-left:4px solid transparent;border-right:4px solid transparent;border-top:4px solid #222"></div>
<div class="a" style="left:818px;top:164px;width:232px;height:29px;background:linear-gradient(to bottom,#f5f6f8,#e9eaee)"></div>
<div class="a" style="left:818px;top:193px;width:232px;height:2px;background:#c9ccd4"></div>
<div class="a" style="left:820px;top:169px;width:22px;height:21px;background:linear-gradient(to bottom,#dfe2e8,#d2d5dc);border-radius:2px"></div>
<svg class="a" style="left:822px;top:171px" width="20" height="18" shape-rendering="crispEdges"><rect x="1.5" y="1.5" width="7" height="7" fill="#fff" stroke="#2f86e8"/><rect x="1.5" y="9.5" width="7" height="7" fill="#fff" stroke="#2f86e8"/><path d="M3,5 h4 M5,3 v4 M3,13 h4 M5,11 v4" stroke="#111"/><path d="M10,3 h7 M10,5 h7 M10,7 h7 M10,11 h7 M10,13 h7 M10,15 h7" stroke="#6a6e76"/></svg>
<svg class="a" style="left:847px;top:170px" width="18" height="18"><text x="1" y="8" font-family="Liberation Sans" font-weight="bold" font-size="9.5" fill="#2a7ee6">A</text><text x="1" y="16.5" font-family="Liberation Sans" font-weight="bold" font-size="9.5" fill="#a01818">Z</text><path d="M12.5,1 V14" stroke="#111" stroke-width="1.3"/><path d="M9.5,11 L12.5,16 L15.5,11 Z" fill="#111"/></svg>
<div class="a" style="left:817px;top:195px;width:233px;height:213px;background:#f0f1f4"></div>
<div class="a" style="left:818px;top:195px;width:1px;height:213px;background:#d6d8de"></div>
<div class="a" style="left:817px;top:195px;width:233px;height:1px;background:#c6c8d0"></div>
<div class="a" style="left:835px;top:196px;width:205px;height:19px;background:#fff"></div>
<div class="a" style="left:929px;top:196px;width:1px;height:19px;background:#dadce2"></div>
<div class="a" style="left:835px;top:196px;width:93px;height:19px;overflow:hidden">
<span class="a" id="w755_50" style="left:17.5px;top:5.03px;font-size:10.6px;line-height:10.6px;font-weight:normal;color:#1e1e3a;white-space:pre;-webkit-text-stroke:0.2px #1e1e3a;">Formatting Rule</span>
</div>
<span class="a" id="w535_51" style="left:932.7px;top:201.03px;font-size:10.6px;line-height:10.6px;font-weight:normal;color:#1e1e3a;white-space:pre;-webkit-text-stroke:0.2px #1e1e3a;">(Collection)</span>
<div class="a" style="left:835px;top:215px;width:205px;height:18px;background:#fff"></div>
<div class="a" style="left:929px;top:215px;width:1px;height:18px;background:#dadce2"></div>
<div class="a" style="left:840px;top:220.5px;width:0;height:0;border-top:3.5px solid transparent;border-bottom:3.5px solid transparent;border-left:4px solid #7a7a80"></div>
<div class="a" style="left:835px;top:215px;width:93px;height:18px;overflow:hidden">
<span class="a" id="w374_52" style="left:17.5px;top:4.03px;font-size:10.6px;line-height:10.6px;font-weight:normal;color:#1e1e3a;white-space:pre;-webkit-text-stroke:0.2px #1e1e3a;">Padding</span>
</div>
<span class="a" id="w450_53" style="left:932.7px;top:219.03px;font-size:10.6px;line-height:10.6px;font-weight:normal;color:#1e1e3a;white-space:pre;-webkit-text-stroke:0.2px #1e1e3a;">0, 0, 0, 0</span>
<div class="a" style="left:835px;top:233px;width:205px;height:18px;background:#fff"></div>
<div class="a" style="left:929px;top:233px;width:1px;height:18px;background:#dadce2"></div>
<div class="a" style="left:840px;top:238.5px;width:0;height:0;border-top:3.5px solid transparent;border-bottom:3.5px solid transparent;border-left:4px solid #7a7a80"></div>
<div class="a" style="left:835px;top:233px;width:93px;height:18px;overflow:hidden">
<span class="a" id="w603_54" style="left:17.5px;top:4.03px;font-size:10.6px;line-height:10.6px;font-weight:normal;color:#1e1e3a;white-space:pre;-webkit-text-stroke:0.2px #1e1e3a;">Style Priority</span>
</div>
<span class="a" id="w687_55" style="left:932.7px;top:237.03px;font-size:10.6px;line-height:10.6px;font-weight:normal;color:#1e1e3a;white-space:pre;-webkit-text-stroke:0.2px #1e1e3a;">(Style Priority)</span>
<div class="a" style="left:835px;top:251px;width:205px;height:18px;background:#fff"></div>
<div class="a" style="left:929px;top:251px;width:1px;height:18px;background:#dadce2"></div>
<div class="a" style="left:840px;top:256.5px;width:0;height:0;border-top:3.5px solid transparent;border-bottom:3.5px solid transparent;border-left:4px solid #7a7a80"></div>
<div class="a" style="left:835px;top:251px;width:93px;height:18px;overflow:hidden">
<span class="a" id="w289_56" style="left:17.5px;top:4.03px;font-size:10.6px;line-height:10.6px;font-weight:normal;color:#1e1e3a;white-space:pre;-webkit-text-stroke:0.2px #1e1e3a;">Styles</span>
</div>
<span class="a" id="w535_57" style="left:932.7px;top:255.03px;font-size:10.6px;line-height:10.6px;font-weight:normal;color:#1e1e3a;white-space:pre;-webkit-text-stroke:0.2px #1e1e3a;">(Collection)</span>
<div class="a" style="left:835px;top:269px;width:205px;height:18px;background:#fff"></div>
<div class="a" style="left:929px;top:269px;width:1px;height:18px;background:#dadce2"></div>
<div class="a" style="left:835px;top:269px;width:93px;height:18px;overflow:hidden">
<span class="a" id="w722_58" style="left:17.5px;top:4.03px;font-size:10.6px;line-height:10.6px;font-weight:normal;color:#1e1e3a;white-space:pre;-webkit-text-stroke:0.2px #1e1e3a;">Text Alignment</span>
</div>
<span class="a" id="w399_59" style="left:932.7px;top:273.03px;font-size:10.6px;line-height:10.6px;font-weight:normal;color:#1e1e3a;white-space:pre;-webkit-text-stroke:0.2px #1e1e3a;">Top Left</span>
<div class="a" style="left:835px;top:305px;width:205px;height:18px;background:#fff"></div>
<div class="a" style="left:929px;top:305px;width:1px;height:18px;background:#dadce2"></div>
<div class="a" style="left:835px;top:305px;width:93px;height:18px;overflow:hidden">
<span class="a" id="w706_60" style="left:17.5px;top:4.03px;font-size:10.6px;line-height:10.6px;font-weight:normal;color:#1e1e3a;white-space:pre;-webkit-text-stroke:0.2px #1e1e3a;">Keep Together</span>
</div>
<span class="a" id="w122_61" style="left:932.7px;top:309.03px;font-size:10.6px;line-height:10.6px;font-weight:normal;color:#1e1e3a;white-space:pre;-webkit-text-stroke:0.2px #1e1e3a;">No</span>
<div class="a" style="left:835px;top:323px;width:205px;height:19px;background:#fff"></div>
<div class="a" style="left:929px;top:323px;width:1px;height:19px;background:#dadce2"></div>
<div class="a" style="left:840px;top:329.0px;width:0;height:0;border-top:3.5px solid transparent;border-bottom:3.5px solid transparent;border-left:4px solid #7a7a80"></div>
<div class="a" style="left:835px;top:323px;width:93px;height:19px;overflow:hidden">
<span class="a" id="w800_62" style="left:17.5px;top:5.03px;font-size:10.6px;line-height:10.6px;font-weight:normal;color:#1e1e3a;white-space:pre;-webkit-text-stroke:0.2px #1e1e3a;">Multi-Column Op</span>
</div>
<span class="a" id="w989_63" style="left:932.7px;top:328.03px;font-size:10.6px;line-height:10.6px;font-weight:normal;color:#1e1e3a;white-space:pre;-webkit-text-stroke:0.2px #1e1e3a;">(Multi-Column Opti...</span>
<div class="a" style="left:835px;top:342px;width:205px;height:18px;background:#fff"></div>
<div class="a" style="left:929px;top:342px;width:1px;height:18px;background:#dadce2"></div>
<div class="a" style="left:835px;top:342px;width:93px;height:18px;overflow:hidden">
<span class="a" id="w540_64" style="left:17.5px;top:4.03px;font-size:10.6px;line-height:10.6px;font-weight:normal;color:#1e1e3a;white-space:pre;-webkit-text-stroke:0.2px #1e1e3a;">Page Break</span>
</div>
<span class="a" id="w246_65" style="left:932.7px;top:346.03px;font-size:10.6px;line-height:10.6px;font-weight:normal;color:#1e1e3a;white-space:pre;-webkit-text-stroke:0.2px #1e1e3a;">None</span>
<div class="a" style="left:835px;top:360px;width:205px;height:18px;background:#fff"></div>
<div class="a" style="left:929px;top:360px;width:1px;height:18px;background:#dadce2"></div>
<div class="a" style="left:840px;top:365.5px;width:0;height:0;border-top:3.5px solid transparent;border-bottom:3.5px solid transparent;border-left:4px solid #7a7a80"></div>
<div class="a" style="left:835px;top:360px;width:93px;height:18px;overflow:hidden">
<span class="a" id="w324_66" style="left:17.5px;top:4.03px;font-size:10.6px;line-height:10.6px;font-weight:normal;color:#1e1e3a;white-space:pre;-webkit-text-stroke:0.2px #1e1e3a;">Scripts</span>
</div>
<span class="a" id="w665_67" style="left:932.7px;top:364.03px;font-size:10.6px;line-height:10.6px;font-weight:normal;color:#1e1e3a;white-space:pre;-webkit-text-stroke:0.2px #1e1e3a;">(Band Scripts)</span>
<div class="a" style="left:835px;top:378px;width:205px;height:19px;background:#fff"></div>
<div class="a" style="left:929px;top:378px;width:1px;height:19px;background:#dadce2"></div>
<div class="a" style="left:835px;top:378px;width:93px;height:19px;overflow:hidden">
<span class="a" id="w290_68" style="left:17.5px;top:5.03px;font-size:10.6px;line-height:10.6px;font-weight:normal;color:#1e1e3a;white-space:pre;-webkit-text-stroke:0.2px #1e1e3a;">Visible</span>
</div>
<span class="a" id="w166_69" style="left:932.7px;top:383.03px;font-size:10.6px;line-height:10.6px;font-weight:normal;color:#1e1e3a;white-space:pre;-webkit-text-stroke:0.2px #1e1e3a;">Yes</span>
<div class="a" style="left:835px;top:215px;width:205px;height:1px;background:#dadce2"></div>
<div class="a" style="left:835px;top:233px;width:205px;height:1px;background:#dadce2"></div>
<div class="a" style="left:835px;top:251px;width:205px;height:1px;background:#dadce2"></div>
<div class="a" style="left:835px;top:269px;width:205px;height:1px;background:#dadce2"></div>
<div class="a" style="left:835px;top:287px;width:205px;height:1px;background:#dadce2"></div>
<div class="a" style="left:835px;top:323px;width:205px;height:1px;background:#dadce2"></div>
<div class="a" style="left:835px;top:342px;width:205px;height:1px;background:#dadce2"></div>
<div class="a" style="left:835px;top:360px;width:205px;height:1px;background:#dadce2"></div>
<div class="a" style="left:835px;top:378px;width:205px;height:1px;background:#dadce2"></div>
<div class="a" style="left:835px;top:397px;width:205px;height:1px;background:#dadce2"></div>
<div class="a" style="left:835px;top:287px;width:205px;height:1px;background:#dadce2"></div>
<div class="a" style="left:834px;top:195px;width:1px;height:213px;background:#d4d6dc"></div>
<div class="a" style="left:1040px;top:195px;width:1px;height:213px;background:#d4d6dc"></div>
<span class="a" id="w440_70" style="left:837px;top:291.03px;font-size:10.6px;line-height:10.6px;font-weight:normal;color:#1e1e3a;white-space:pre;-webkit-text-stroke:0.2px #1e1e3a;">Behavior</span>
<span class="a" id="w240_71" style="left:837px;top:401.03px;font-size:10.6px;line-height:10.6px;font-weight:normal;color:#1e1e3a;white-space:pre;-webkit-text-stroke:0.2px #1e1e3a;">Data</span>
<svg class="a" style="left:1027px;top:295px" width="10" height="6"><path d="M1,5 L5,1 L9,5" fill="none" stroke="#777" stroke-width="1.2"/></svg>
<svg class="a" style="left:1027px;top:403px" width="10" height="6"><path d="M1,5 L5,1 L9,5" fill="none" stroke="#777" stroke-width="1.2"/></svg>
<div class="a" style="left:1041px;top:195px;width:9px;height:213px;background:#eceef2"></div>
<svg class="a" style="left:1043px;top:200px" width="8" height="6"><path d="M0,5 L4,1 L8,5 Z" fill="#666"/></svg>
<div class="a" style="left:1046px;top:310px;width:8px;height:110px;border:1px solid #9c9ca8;border-radius:3px;background:#dcdde3"></div>
<svg class="a" style="left:884px;top:131px" width="16" height="22"><path d="M1.5,1.5 L1.5,17.5 L5.3,13.8 L8.2,20 L10.6,19 L7.8,12.8 L12.8,12.8 Z" fill="#fff" stroke="#000" stroke-width="1" stroke-linejoin="miter"/></svg>
<svg class="a" style="left:0;top:0" width="1050" height="408" shape-rendering="crispEdges"><rect x="31.5" y="11.5" width="13" height="15" rx="1" fill="#fff" stroke="#6b9bd6"/><line x1="33.5" y1="12" x2="33.5" y2="26" stroke="#a9c4ea"/><line x1="42.5" y1="12" x2="42.5" y2="26" stroke="#a9c4ea"/><line x1="32" y1="13.5" x2="44" y2="13.5" stroke="#a9c4ea"/><line x1="32" y1="24.5" x2="44" y2="24.5" stroke="#a9c4ea"/><rect x="33.5" y="14.5" width="9" height="3" rx="0.5" fill="#f59a30" stroke="#d86a18"/><rect x="31.5" y="65.5" width="13" height="15" rx="1" fill="#fff" stroke="#6b9bd6"/><line x1="33.5" y1="66" x2="33.5" y2="80" stroke="#a9c4ea"/><line x1="42.5" y1="66" x2="42.5" y2="80" stroke="#a9c4ea"/><line x1="32" y1="67.5" x2="44" y2="67.5" stroke="#a9c4ea"/><line x1="32" y1="78.5" x2="44" y2="78.5" stroke="#a9c4ea"/><rect x="33.5" y="68.5" width="9" height="9" fill="#fff" stroke="#6f7378"/><line x1="35" y1="71" x2="41" y2="71" stroke="#6f7378"/><line x1="35" y1="73" x2="41" y2="73" stroke="#6f7378"/><line x1="35" y1="75" x2="39" y2="75" stroke="#6f7378"/><rect x="31.5" y="104.5" width="12" height="14" rx="1" fill="#fff" stroke="#6b9bd6"/><rect x="34.5" y="103.5" width="6" height="3" rx="1" fill="#3f7fd0" stroke="#3f7fd0"/><rect x="33.5" y="107.5" width="7" height="8" fill="#fff" stroke="#6f7378"/><line x1="35" y1="110" x2="39" y2="110" stroke="#6f7378"/><line x1="35" y1="112" x2="39" y2="112" stroke="#6f7378"/><rect x="51.5" y="125.5" width="12" height="14" rx="1" fill="#fff" stroke="#6b9bd6"/><rect x="54.5" y="124.5" width="6" height="3" rx="1" fill="#3f7fd0" stroke="#3f7fd0"/><rect x="53.5" y="129.5" width="8" height="3" rx="0.5" fill="#f59a30" stroke="#d86a18"/><line x1="53.5" y1="126" x2="53.5" y2="139" stroke="#a9c4ea"/><line x1="60.5" y1="126" x2="60.5" y2="139" stroke="#a9c4ea"/><rect x="51.5" y="160.5" width="13" height="15" rx="1" fill="#fff" stroke="#6b9bd6"/><line x1="53.5" y1="161" x2="53.5" y2="175" stroke="#a9c4ea"/><line x1="62.5" y1="161" x2="62.5" y2="175" stroke="#a9c4ea"/><line x1="52" y1="162.5" x2="64" y2="162.5" stroke="#a9c4ea"/><line x1="52" y1="173.5" x2="64" y2="173.5" stroke="#a9c4ea"/><rect x="53.5" y="163.5" width="9" height="9" fill="#fff" stroke="#6f7378"/><line x1="55" y1="166" x2="61" y2="166" stroke="#6f7378"/><line x1="55" y1="168" x2="61" y2="168" stroke="#6f7378"/><line x1="55" y1="170" x2="59" y2="170" stroke="#6f7378"/><rect x="30.5" y="200.5" width="12" height="3" rx="1.5" fill="#c8d0d8" stroke="#5c6670"/><line x1="33" y1="206" x2="45" y2="206" stroke="#39424c" stroke-width="1"/><line x1="33" y1="208" x2="45" y2="208" stroke="#39424c" stroke-width="1"/><rect x="30.5" y="209.5" width="12" height="3" rx="1.5" fill="#8ed030" stroke="#4f9a12"/><rect x="31.5" y="339.5" width="13" height="15" rx="1" fill="#fff" stroke="#6b9bd6"/><line x1="33.5" y1="340" x2="33.5" y2="354" stroke="#a9c4ea"/><line x1="42.5" y1="340" x2="42.5" y2="354" stroke="#a9c4ea"/><line x1="32" y1="341.5" x2="44" y2="341.5" stroke="#a9c4ea"/><line x1="32" y1="352.5" x2="44" y2="352.5" stroke="#a9c4ea"/><rect x="33.5" y="347.5" width="9" height="3" rx="0.5" fill="#7cc420" stroke="#4f9a12"/><rect x="873.5" y="-4.5" width="13" height="15" rx="1" fill="#fff" stroke="#6b9bd6"/><line x1="875.5" y1="-4" x2="875.5" y2="10" stroke="#a9c4ea"/><line x1="884.5" y1="-4" x2="884.5" y2="10" stroke="#a9c4ea"/><line x1="874" y1="-2.5" x2="886" y2="-2.5" stroke="#a9c4ea"/><line x1="874" y1="8.5" x2="886" y2="8.5" stroke="#a9c4ea"/><rect x="875.5" y="-1.5" width="9" height="9" fill="#fff" stroke="#6f7378"/><line x1="877" y1="1" x2="883" y2="1" stroke="#6f7378"/><line x1="877" y1="3" x2="883" y2="3" stroke="#6f7378"/><line x1="877" y1="5" x2="881" y2="5" stroke="#6f7378"/><rect x="854.5" y="14.5" width="12" height="3" rx="1.5" fill="#c8d0d8" stroke="#5c6670"/><line x1="857" y1="20" x2="869" y2="20" stroke="#39424c" stroke-width="1"/><line x1="857" y1="22" x2="869" y2="22" stroke="#39424c" stroke-width="1"/><rect x="854.5" y="23.5" width="12" height="3" rx="1.5" fill="#8ed030" stroke="#4f9a12"/><rect x="854.5" y="31.5" width="13" height="15" rx="1" fill="#fff" stroke="#6b9bd6"/><line x1="856.5" y1="32" x2="856.5" y2="46" stroke="#a9c4ea"/><line x1="865.5" y1="32" x2="865.5" y2="46" stroke="#a9c4ea"/><line x1="855" y1="33.5" x2="867" y2="33.5" stroke="#a9c4ea"/><line x1="855" y1="44.5" x2="867" y2="44.5" stroke="#a9c4ea"/><rect x="856.5" y="39.5" width="9" height="3" rx="0.5" fill="#7cc420" stroke="#4f9a12"/><rect x="855.5" y="50.5" width="12" height="14" rx="1" fill="#fff" stroke="#6b9bd6"/><rect x="858.5" y="49.5" width="6" height="3" rx="1" fill="#3f7fd0" stroke="#3f7fd0"/><rect x="857.5" y="58.5" width="8" height="3" rx="0.5" fill="#7cc420" stroke="#4f9a12"/><line x1="857.5" y1="51" x2="857.5" y2="64" stroke="#a9c4ea"/><line x1="864.5" y1="51" x2="864.5" y2="64" stroke="#a9c4ea"/><rect x="854.5" y="67.5" width="13" height="15" rx="1" fill="#fff" stroke="#6b9bd6"/><line x1="856.5" y1="68" x2="856.5" y2="82" stroke="#a9c4ea"/><line x1="865.5" y1="68" x2="865.5" y2="82" stroke="#a9c4ea"/><line x1="855" y1="69.5" x2="867" y2="69.5" stroke="#a9c4ea"/><line x1="855" y1="80.5" x2="867" y2="80.5" stroke="#a9c4ea"/><rect x="854.5" y="80" width="13" height="2.5" fill="#6cb81c"/></svg>
<div class="a" style="left:21px;top:114px;width:150px;height:30px;background:#fff24c;mix-blend-mode:multiply"></div>
<div class="a" style="left:24px;top:157px;width:150px;height:25px;background:#fff24c;mix-blend-mode:multiply"></div>
<div class="a" style="left:832px;top:374px;width:210px;height:26px;background:#fff24c;mix-blend-mode:multiply"></div>
<svg class="a" style="left:0;top:0" width="1050" height="408" viewBox="0 0 1050 408">
<defs><filter id="sh" x="-30%" y="-30%" width="160%" height="160%"><feDropShadow dx="-1" dy="3" stdDeviation="2.5" flood-color="#000" flood-opacity="0.5"/></filter></defs>
<g fill="#08ac8e" filter="url(#sh)">
<path d="M152.0,128.0 L174.91,101.18 A20.5,20.5 0 1 1 186.64,134.63 Z"/>
<path d="M328.5,179 L465,179 A60,58.0 0 0 1 465,295 L328.5,295 A60,58.0 0 0 1 328.5,179 Z"/><path d="M194.5,137.5 L300,186 L272,222 Z"/>
<path d="M834.5,378.0 L804.18,396.50 A20.5,20.5 0 1 1 803.31,361.00 Z"/>
</g>
<g fill="#fff" font-family="Liberation Sans" text-anchor="middle">
<text x="186.5" y="123" font-size="22.5">1</text>
<text x="797.5" y="387" font-size="22.5">2</text>
<text x="396.5" y="224" font-size="15.5">Select each section of the</text>
<text x="396.5" y="242.5" font-size="15.5">form and set Visible</text>
<text x="396.5" y="261" font-size="15.5">property to NO</text>
</g>
</svg>
</body></html>
